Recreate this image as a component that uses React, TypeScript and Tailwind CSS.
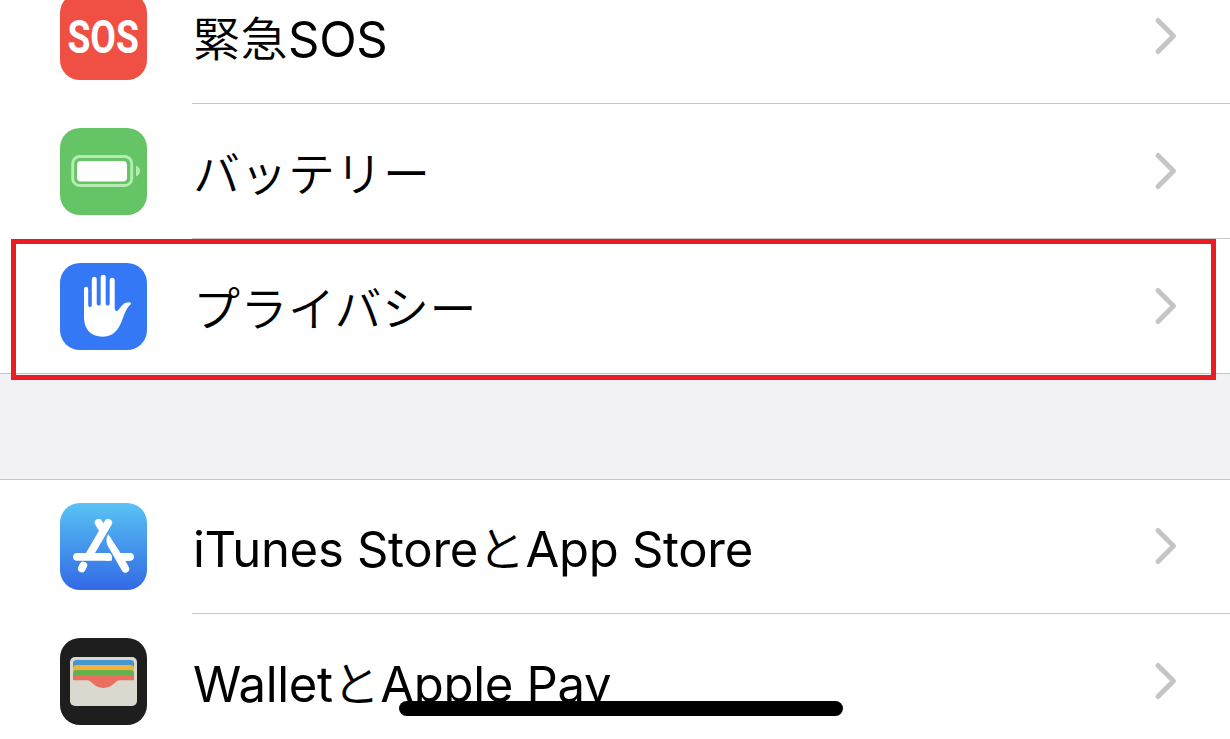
import React from "react";

interface SettingsRowProps {
  icon: React.ReactNode;
  children: React.ReactNode;
  last?: boolean;
}

const Chevron = () => (
  <svg width="24" height="40" viewBox="0 0 24 40" fill="none" className="shrink-0">
    <path d="M4 4.5 L19.5 20 L4 35.5" stroke="#c5c5c7" strokeWidth="5" strokeLinecap="round" strokeLinejoin="round" />
  </svg>
);

const SosIcon = () => (
  <div className="flex size-[87px] items-center justify-center rounded-[20px] bg-[#f04f44]">
    <span className="scale-x-[0.81] pt-px font-['Roboto'] text-[46px] leading-none font-bold text-white">SOS</span>
  </div>
);

const BatteryIcon = () => (
  <svg width="87" height="87" viewBox="0 0 87 87">
    <rect width="87" height="87" rx="20" fill="#65c466" />
    <rect x="12.7" y="28.6" width="59" height="29" rx="7" fill="none" stroke="#b4ecb1" strokeWidth="3" />
    <rect x="17" y="33" width="50" height="20.5" rx="4" fill="#fff" />
    <path d="M76 37.5 Q80 39.5 80 43 Q80 46.5 76 48.5 Z" fill="#b4ecb1" />
  </svg>
);

const HandIcon = () => (
  <svg width="87" height="87" viewBox="0 0 87 87">
    <rect width="87" height="87" rx="20" fill="#3478f6" />
    <path
      d="M24 26 Q24 23.8 26 23.8 Q28.2 23.8 28.2 26 V42.5 Q28.8 44 30 44 Q31.5 44 31.8 42.5 V16.2 Q31.8 13.7 34.2 13.7 Q36.7 13.7 36.7 16.2 V41 Q37.2 42.5 38.7 42.5 Q40.3 42.5 40.7 41 V14.2 Q40.7 11.7 43.2 11.7 Q45.7 11.7 45.7 14.2 V41 Q46.2 42.5 47.7 42.5 Q49.3 42.5 49.7 41 V17.2 Q49.7 14.7 52.2 14.7 Q54.7 14.7 54.7 17.2 V45.5 Q55.2 48.5 57.2 48 C60 46 62 41 66 39.8 Q69.5 38.8 71 40 Q71.3 41 69.5 42.5 C66 46 65 50 62.5 56 C59 66 54 73.7 43 73.7 C30 73.7 24 65.5 24 54 Z"
      fill="#fff"
    />
  </svg>
);

const AppStoreIcon = () => (
  <svg width="87" height="87" viewBox="0 0 87 87">
    <defs>
      <linearGradient id="storeBg" x1="0" y1="0" x2="0" y2="1">
        <stop offset="0" stopColor="#5ac2f5" />
        <stop offset="0.5" stopColor="#4496ec" />
        <stop offset="1" stopColor="#3369e6" />
      </linearGradient>
    </defs>
    <rect width="87" height="87" rx="20" fill="url(#storeBg)" />
    <g stroke="#fff" strokeWidth="7.8" strokeLinecap="round" fill="none">
      <path d="M38.6 19.8 L43 27" />
      <path d="M48.2 19.8 L29 52.5" />
      <path d="M17 53.8 H48" />
      <path d="M66 53.8 H70" />
      <path d="M23.3 62.5 L21.8 65.5" />
    </g>
    <path d="M48.3 31.3 C45.8 35 46 39.5 48 43.2 L62 67.8 A3.9 3.9 0 0 0 68.8 64 L63.5 54.5 Z" fill="#fff" />
    <path d="M46 49.9 H49.5 Q52.3 53 51.7 57.7 H46 Z" fill="#fff" />
    <path d="M58 49.9 H69 V57.7 H62 Z" fill="#fff" />
  </svg>
);

const WalletIcon = () => (
  <svg width="87" height="87" viewBox="0 0 87 87">
    <rect width="87" height="87" rx="20" fill="#1e1e1e" />
    <rect x="10" y="19" width="67" height="49" rx="5" fill="#dad9d0" />
    <path d="M13 42 V25.5 Q13 22 16.5 22 H70.5 Q74 22 74 25.5 V42 Z" fill="#4795cd" />
    <path d="M13 42 V30.5 Q13 27 16.5 27 H70.5 Q74 27 74 30.5 V42 Z" fill="#f4b13c" />
    <path d="M13 42 V35.5 Q13 32 16.5 32 H70.5 Q74 32 74 35.5 V42 Z" fill="#65b14c" />
    <path
      d="M13 42.3 V40.5 Q13 37 16.5 37 H70.5 Q74 37 74 40.5 V42.3 H60 C54.5 42.3 53.5 50 43.5 50 C33.5 50 32.5 42.3 27 42.3 Z"
      fill="#e96f60"
    />
  </svg>
);

const Kana = ({ children }: { children: React.ReactNode }) => (
  <span className="align-[1px] font-['Noto_Sans_CJK_JP',sans-serif] text-[47px] font-[350] tracking-[0.5px]">{children}</span>
);

const SettingsRow = ({ icon, children, last }: SettingsRowProps) => (
  <div className="flex h-[135px] shrink-0 pl-[60px]">
    <div className="flex w-[132px] shrink-0 items-center">{icon}</div>
    <div
      className={
        last
          ? "flex flex-1 items-center border-b border-transparent pr-[52px]"
          : "flex flex-1 items-center border-b border-[#c6c6c8] pr-[52px]"
      }
    >
      <div className="flex-1 pt-1 pl-px text-[49px] leading-[60px] tracking-[-0.3px] whitespace-nowrap">{children}</div>
      <Chevron />
    </div>
  </div>
);

const App = () => {
  return (
    <div className="relative flex h-[739px] w-[1230px] flex-col overflow-hidden bg-white font-['Inter','Noto_Sans_CJK_JP',sans-serif] text-black">
      <div className="-mt-[31px] border-b border-[#c6c6c8]">
        <SettingsRow icon={<SosIcon />}>
          <Kana>緊急</Kana>SOS
        </SettingsRow>
        <SettingsRow icon={<BatteryIcon />}>
          <Kana>バッテリー</Kana>
        </SettingsRow>
        <div className="-mb-px">
          <SettingsRow icon={<HandIcon />} last>
            <Kana>プライバシー</Kana>
          </SettingsRow>
        </div>
      </div>

      <div className="h-[105px] shrink-0 bg-[#f2f1f6]" />

      <div className="shadow-[inset_0_1px_0_#c6c6c8]">
        <SettingsRow icon={<AppStoreIcon />}>
          iTunes Store<Kana>と</Kana>App Store
        </SettingsRow>
        <SettingsRow icon={<WalletIcon />} last>
          Wallet<Kana>と</Kana>Apple Pay
        </SettingsRow>
      </div>

      {/* highlight around the privacy row */}
      <div className="absolute top-[239px] left-[11px] h-[141px] w-[1205px] border-5 border-[#ea1c24]" />

      {/* home indicator */}
      <div className="absolute top-[701px] left-[399px] h-[15px] w-[444px] rounded-full bg-black" />
    </div>
  );
};

export default App;
